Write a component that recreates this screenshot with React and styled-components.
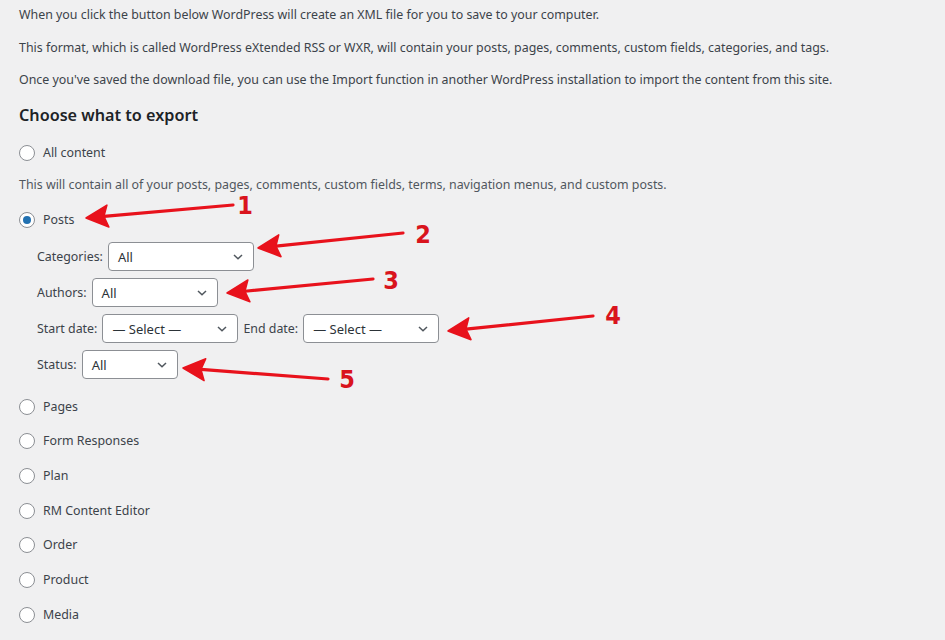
import React from 'react'
import styled, { createGlobalStyle } from 'styled-components'

const GlobalStyle = createGlobalStyle`
  html, body {
    margin: 0;
    padding: 0;
    background: #f0f0f1;
  }
  body {
    font-family: "Noto Sans", "Open Sans", sans-serif;
    color: #3c434a;
  }
`;

const types = ['Pages', 'Form Responses', 'Plan', 'RM Content Editor', 'Order', 'Product', 'Media'];

// annotation arrows drawn over the form: tail, tip and the number label
const arrows = [
  { tail: [233, 205], tip: [86, 218], num: '1', nx: 245, ny: 214 },
  { tail: [403, 233], tip: [258, 248], num: '2', nx: 423, ny: 243 },
  { tail: [373, 279], tip: [227, 293], num: '3', nx: 391, ny: 289 },
  { tail: [593, 316], tip: [448, 331], num: '4', nx: 613, ny: 324 },
  { tail: [328, 379], tip: [183, 368], num: '5', nx: 347, ny: 388 },
];

function Chevron() {
  return (
    <svg width="12" height="8" viewBox="0 0 12 8">
      <path d="M2 2 L6 5.8 L10 2" fill="none" stroke="#50575e" strokeWidth="1.5" />
    </svg>
  );
}

function Select({ width, value }) {
  return (
    <SelectBox $width={width}>
      <span>{value}</span>
      <Chevron />
    </SelectBox>
  );
}

function Arrow({ tail, tip, num, nx, ny }) {
  const dx = tip[0] - tail[0];
  const dy = tip[1] - tail[1];
  const len = Math.hypot(dx, dy);
  const ux = dx / len;
  const uy = dy / len;
  const hl = 22;
  const hw = 11;
  const bx = tip[0] - ux * hl;
  const by = tip[1] - uy * hl;
  const p1 = [bx - uy * hw, by + ux * hw];
  const p2 = [bx + uy * hw, by - ux * hw];
  return (
    <g>
      <line x1={tail[0]} y1={tail[1]} x2={bx + ux * 4} y2={by + uy * 4} stroke="#e8121c" strokeWidth="3.2" strokeLinecap="round" />
      <polygon points={`${tip[0]},${tip[1]} ${p1[0]},${p1[1]} ${bx + ux * 4},${by + uy * 4} ${p2[0]},${p2[1]}`} fill="#e8121c" stroke="#e8121c" strokeWidth="1.5" strokeLinejoin="round" />
      <Num x={nx} y={ny} textAnchor="middle">{num}</Num>
    </g>
  );
}

export default function App() {
  return (
    <Page>
      <GlobalStyle />
      <Intro>
        <p>When you click the button below WordPress will create an XML file for you to save to your computer.</p>
        <p>This format, which is called WordPress eXtended RSS or WXR, will contain your posts, pages, comments, custom fields, categories, and tags.</p>
        <p>Once you've saved the download file, you can use the Import function in another WordPress installation to import the content from this site.</p>
      </Intro>
      <Heading>Choose what to export</Heading>
      <RadioRow>
        <Radio />
        All content
      </RadioRow>
      <Description>This will contain all of your posts, pages, comments, custom fields, terms, navigation menus, and custom posts.</Description>
      <RadioRow>
        <Radio $checked />
        Posts
      </RadioRow>
      <Filters>
        <FilterRow>
          <Label>Categories:</Label>
          <Select width={146} value="All" />
        </FilterRow>
        <FilterRow>
          <Label>Authors:</Label>
          <Select width={126} value="All" />
        </FilterRow>
        <FilterRow>
          <Label>Start date:</Label>
          <Select width={136} value="— Select —" />
          <Label>End date:</Label>
          <Select width={136} value="— Select —" />
        </FilterRow>
        <FilterRow>
          <Label>Status:</Label>
          <Select width={96} value="All" />
        </FilterRow>
      </Filters>
      <TypeList>
        {types.map((t) => (
          <RadioRow key={t}>
            <Radio />
            {t}
          </RadioRow>
        ))}
      </TypeList>
      <Overlay width="945" height="640" viewBox="0 0 945 640">
        {arrows.map((a) => (
          <Arrow key={a.num} {...a} />
        ))}
      </Overlay>
    </Page>
  );
}

const Page = styled.div`
  position: relative;
  width: 945px;
  height: 640px;
  overflow: hidden;
  padding: 5px 0 0 19px;
  box-sizing: border-box;
  font-size: 12.4px;
`;

const Intro = styled.div`
  p {
    margin: 0 0 12.5px;
    line-height: 20px;
    white-space: nowrap;
  }
`;

const Heading = styled.h2`
  margin: 0.5px 0 0;
  font-size: 16.2px;
  line-height: 24px;
  font-weight: 600;
  color: #1d2327;
`;

const RadioRow = styled.label`
  display: flex;
  align-items: center;
  height: 20px;
  margin-top: 16px;
  gap: 8px;
  line-height: 20px;
`;

const Radio = styled.span`
  width: 16px;
  height: 16px;
  box-sizing: border-box;
  border-radius: 50%;
  border: 1px solid #8c8f94;
  background: #fff;
  flex: none;
  display: flex;
  align-items: center;
  justify-content: center;
  &::after {
    content: '';
    display: ${(p) => (p.$checked ? 'block' : 'none')};
    width: 8px;
    height: 8px;
    border-radius: 50%;
    background: #2271b1;
  }
`;

const Description = styled.p`
  margin: 12px 0 0;
  line-height: 20px;
  color: #50575e;
  white-space: nowrap;

  & + ${RadioRow} {
    margin-top: 15px;
  }
`;

const Filters = styled.div`
  display: flex;
  flex-direction: column;
  gap: 7px;
  margin: 12.5px 0 0 18px;
`;

const FilterRow = styled.div`
  display: flex;
  align-items: center;
  gap: 5px;
`;

const Label = styled.span`
  line-height: 20px;
`;

const SelectBox = styled.div`
  width: ${(p) => p.$width}px;
  height: 29px;
  box-sizing: border-box;
  border: 1px solid #8c8f94;
  border-radius: 4px;
  background: #fff;
  display: flex;
  align-items: center;
  justify-content: space-between;
  padding: 0 9px 0 9px;
  font-size: 13px;
  color: #2c3338;
`;

const TypeList = styled.div`
  margin-top: 3px;
  display: flex;
  flex-direction: column;

  ${RadioRow} {
    margin-top: 14.67px;
  }
`;

const Overlay = styled.svg`
  position: absolute;
  left: 0;
  top: 0;
  pointer-events: none;
`;

const Num = styled.text`
  font-family: "Liberation Sans Narrow", "DejaVu Sans Condensed", sans-serif;
  font-weight: 700;
  font-size: 25px;
  fill: #d9141d;
`;
